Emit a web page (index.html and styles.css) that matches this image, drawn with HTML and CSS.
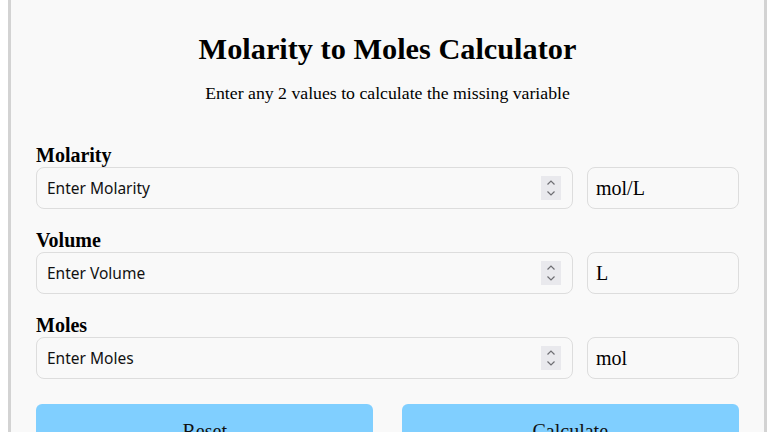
FILE: index.html
```html
<!DOCTYPE html>
<html lang="en">
<head>
    <meta charset="UTF-8">
    <meta name="viewport" content="width=device-width, initial-scale=1.0">
    <title>Molarity to Moles Calculator</title>
    <link rel="stylesheet" href="styles.css">
</head>
<body>
<div class="container">
    <h1>Molarity to Moles Calculator</h1>
    <p class="subtitle">Enter any 2 values to calculate the missing variable</p>
    <form id="calcForm">
        <div class="form-group">
            <label for="molarity">Molarity</label>
            <div class="input-row">
                <div class="field">
                    <input type="number" id="molarity" placeholder="Enter Molarity">
                    <span class="spin"><svg width="20" height="24" viewBox="0 0 20 24"><path d="M6.5 8.5 L10 5 L13.5 8.5 M6.5 15.5 L10 19 L13.5 15.5" fill="none" stroke="#6e6e73" stroke-width="1.2"/></svg></span>
                </div>
                <div class="unit">mol/L</div>
            </div>
        </div>
        <div class="form-group">
            <label for="volume">Volume</label>
            <div class="input-row">
                <div class="field">
                    <input type="number" id="volume" placeholder="Enter Volume">
                    <span class="spin"><svg width="20" height="24" viewBox="0 0 20 24"><path d="M6.5 8.5 L10 5 L13.5 8.5 M6.5 15.5 L10 19 L13.5 15.5" fill="none" stroke="#6e6e73" stroke-width="1.2"/></svg></span>
                </div>
                <div class="unit">L</div>
            </div>
        </div>
        <div class="form-group">
            <label for="moles">Moles</label>
            <div class="input-row">
                <div class="field">
                    <input type="number" id="moles" placeholder="Enter Moles">
                    <span class="spin"><svg width="20" height="24" viewBox="0 0 20 24"><path d="M6.5 8.5 L10 5 L13.5 8.5 M6.5 15.5 L10 19 L13.5 15.5" fill="none" stroke="#6e6e73" stroke-width="1.2"/></svg></span>
                </div>
                <div class="unit">mol</div>
            </div>
        </div>
        <div class="buttons">
            <button type="reset" class="btn">Reset</button>
            <button type="submit" class="btn">Calculate</button>
        </div>
    </form>
</div>

<script>
    document.getElementById('calcForm').addEventListener('submit', function(event) {
        event.preventDefault();
        const m = parseFloat(document.getElementById('molarity').value);
        const v = parseFloat(document.getElementById('volume').value);
        const n = parseFloat(document.getElementById('moles').value);
        if (isNaN(n) && !isNaN(m) && !isNaN(v)) {
            document.getElementById('moles').value = m * v;
        } else if (isNaN(m) && !isNaN(n) && !isNaN(v)) {
            document.getElementById('molarity').value = n / v;
        } else if (isNaN(v) && !isNaN(n) && !isNaN(m)) {
            document.getElementById('volume').value = n / m;
        }
    });
</script>
</body>
</html>
```

FILE: styles.css
```css
body {
    font-family: "Liberation Serif", "Times New Roman", serif;
    background-color: #fff;
    margin: 0;
    padding: 0 1px 0 8px;
}
.container {
    margin-top: -16px;
    background: #f9f9f9;
    border: 3px solid #d3d3d3;
    border-radius: 10px;
    padding: 25px;
}
h1 {
    text-align: center;
    font-size: 30.3px;
    margin: 20px 0 16px;
}
.subtitle {
    text-align: center;
    font-size: 17.75px;
    margin: 0 0 40px;
}
.form-group {
    margin-bottom: 20px;
}
.form-group label {
    display: block;
    font-size: 20px;
    font-weight: bold;
}
.input-row {
    display: flex;
    gap: 14px;
}
.field {
    flex: 1;
    display: flex;
    align-items: center;
    height: 42px;
    box-sizing: border-box;
    padding: 0 11px 0 10px;
    border: 1px solid #ddd;
    border-radius: 8px;
}
.field input {
    flex: 1;
    min-width: 0;
    padding: 0;
    font-family: "Noto Sans", "Open Sans", sans-serif;
    font-size: 15.5px;
    background: transparent;
    border: none;
    outline: none;
    -moz-appearance: textfield;
}
.field input::-webkit-inner-spin-button,
.field input::-webkit-outer-spin-button {
    -webkit-appearance: none;
    margin: 0;
}
.field input::placeholder {
    color: #111;
}
.spin {
    display: block;
    width: 20px;
    height: 24px;
    background: #e9e9ed;
}
.spin svg {
    display: block;
}
.unit {
    width: 152px;
    height: 42px;
    box-sizing: border-box;
    padding: 0 8px;
    display: flex;
    align-items: center;
    font-size: 20px;
    border: 1px solid #ddd;
    border-radius: 8px;
}
.buttons {
    display: flex;
    justify-content: space-between;
    padding-top: 5px;
}
.btn {
    width: 48%;
    height: 54px;
    font-family: "Liberation Serif", serif;
    font-size: 20px;
    color: #111;
    background-color: #80cfff;
    border: none;
    border-radius: 6px;
    cursor: pointer;
}
```
